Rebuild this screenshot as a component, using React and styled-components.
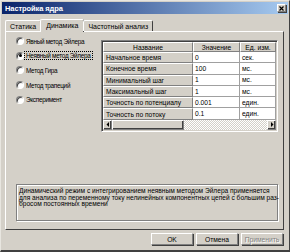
import React from 'react';
import styled, { createGlobalStyle, css } from 'styled-components';

const GlobalStyle = createGlobalStyle`
  html, body {
    margin: 0;
    padding: 0;
    background: #d4d0c8;
  }
  body {
    font-family: "Liberation Sans", Arial, sans-serif;
    font-size: 6.7px;
    color: #000;
  }
`;

const raised = css`
  border-top: 1px solid #fff;
  border-left: 1px solid #fff;
  border-right: 1px solid #808080;
  border-bottom: 1px solid #808080;
`;

const Window = styled.div`
  width: 290px;
  height: 252px;
  box-sizing: border-box;
  background: #d4d0c8;
  border-top: 1px solid #e8e6e0;
  border-left: 1px solid #e8e6e0;
  border-right: 1px solid #404040;
  border-bottom: 2px solid #404040;
  padding: 1px;
  display: flex;
  flex-direction: column;
`;

const TitleBar = styled.div`
  height: 12px;
  display: flex;
  align-items: center;
  justify-content: space-between;
  padding: 0 2px 0 3px;
  background: linear-gradient(to right, #0a246a, #a6caf0);
`;

const Title = styled.span`
  color: #fff;
  font-weight: bold;
  font-size: 7.5px;
  letter-spacing: -0.1px;
`;

const CloseButton = styled.div`
  width: 9px;
  height: 8px;
  box-sizing: border-box;
  background: #d4d0c8;
  ${raised};
  box-shadow: 1px 1px 0 #404040;
  display: flex;
  align-items: center;
  justify-content: center;
`;

const Body = styled.div`
  flex: 1;
  display: flex;
  flex-direction: column;
  padding: 3px 4px 0 3px;
`;

const TabStrip = styled.div`
  display: flex;
  align-items: flex-end;
  height: 14px;
  position: relative;
  z-index: 1;
`;

const Tab = styled.div`
  height: ${(p) => (p.active ? 13 : 11)}px;
  padding: 0 ${(p) => (p.active ? 5 : 4)}px;
  margin: ${(p) => (p.active ? '0 -1px -1px -1px' : '0')};
  box-sizing: border-box;
  display: flex;
  align-items: center;
  background: #d4d0c8;
  border-top: 1px solid #fff;
  border-left: 1px solid #fff;
  border-right: 1px solid #404040;
  border-radius: 2px 2px 0 0;
  padding-bottom: ${(p) => (p.active ? 1 : 0)}px;
  font-size: 7px;
  white-space: nowrap;
`;

const Panel = styled.div`
  height: 199px;
  box-sizing: border-box;
  ${raised};
  border-right-color: #404040;
  border-bottom-color: #404040;
  padding: 2px 4px 8px 10px;
  display: flex;
  flex-direction: column;
`;

const Top = styled.div`
  display: flex;
  align-items: flex-start;
`;

const RadioList = styled.div`
  width: 85px;
  display: flex;
  flex-direction: column;
`;

const RadioRow = styled.div`
  height: 14.6px;
  display: flex;
  align-items: center;
  gap: 1px;
  white-space: nowrap;
`;

const RadioCircle = styled.span`
  width: 8px;
  height: 8px;
  box-sizing: border-box;
  border-radius: 50%;
  background: #fff;
  border: 1px solid;
  border-color: #808080 #fff #fff #808080;
  box-shadow: inset 1px 1px 0 #404040;
  display: flex;
  align-items: center;
  justify-content: center;
  flex: none;
  &::after {
    content: '';
    width: 3px;
    height: 3px;
    border-radius: 50%;
    background: ${(p) => (p.checked ? '#000' : 'transparent')};
  }
`;

const RadioLabel = styled.span`
  padding: 0 1px;
  font-size: 6.4px;
  letter-spacing: -0.3px;
  outline: ${(p) => (p.focused ? '1px dotted #000' : 'none')};
`;

const Table = styled.div`
  margin-top: 6px;
  width: 177px;
  box-sizing: border-box;
  border-top: 1px solid #808080;
  border-left: 1px solid #808080;
  border-right: 1px solid #fff;
  border-bottom: 1px solid #fff;
  box-shadow: inset 1px 1px 0 #404040;
  padding: 1px;
  background: #d4d0c8;
`;

const GridBody = styled.div`
  display: grid;
  grid-template-columns: 90px 47px 36px;
  grid-template-rows: 10px repeat(6, 11.3px);
  background: #fff;
`;

const HeadCell = styled.div`
  box-sizing: border-box;
  background: #d4d0c8;
  ${raised};
  display: flex;
  align-items: center;
  justify-content: center;
  white-space: nowrap;
  overflow: hidden;
`;

const RowHead = styled(HeadCell)`
  justify-content: flex-start;
  padding-left: 2px;
`;

const Cell = styled.div`
  box-sizing: border-box;
  border-right: 1px solid #a0a0a0;
  border-bottom: 1px solid #a0a0a0;
  display: flex;
  align-items: center;
  padding-left: 2px;
  white-space: nowrap;
  background: #fff;
`;

const ScrollBar = styled.div`
  display: flex;
  height: 10px;
  background: repeating-conic-gradient(#fff 0 25%, #d4d0c8 0 50%) 0 0 / 2px 2px;
`;

const ScrollButton = styled.div`
  width: 9px;
  box-sizing: border-box;
  background: #d4d0c8;
  ${raised};
  box-shadow: inset -1px -1px 0 #404040;
  display: flex;
  align-items: center;
  justify-content: center;
  flex: none;
`;

const Thumb = styled.div`
  width: 72px;
  box-sizing: border-box;
  background: #d4d0c8;
  ${raised};
  box-shadow: inset -1px -1px 0 #404040;
`;

const Track = styled.div`
  flex: 1;
`;

const Description = styled.div`
  margin-top: auto;
  height: 37px;
  width: 262px;
  box-sizing: border-box;
  border: 1px solid #808080;
  box-shadow: inset 1px 1px 0 #fff, 1px 1px 0 #fff;
  padding: 3px 2px;
  font-size: 6.6px;
  line-height: 6.6px;
  white-space: nowrap;
`;

const ButtonRow = styled.div`
  display: flex;
  justify-content: flex-end;
  gap: 3px;
  padding: 3px 1px 0 0;
`;

const Button = styled.div`
  width: 42px;
  height: 12px;
  box-sizing: border-box;
  ${raised};
  box-shadow: 1px 1px 0 #404040;
  display: flex;
  align-items: center;
  justify-content: center;
  color: ${(p) => (p.disabled ? '#808080' : '#000')};
  text-shadow: ${(p) => (p.disabled ? '1px 1px 0 #fff' : 'none')};
`;

const Arrow = ({ dir }) => (
  <svg width="4" height="5" viewBox="0 0 4 5">
    {dir === 'left'
      ? <polygon points="3,0 3,5 0.5,2.5" fill="#000" />
      : <polygon points="1,0 1,5 3.5,2.5" fill="#000" />}
  </svg>
);

const methods = [
  'Явный метод Эйлера',
  'Неявный метод Эйлера',
  'Метод Гира',
  'Метод трапеций',
  'Эксперимент',
];

const rows = [
  ['Начальное время', '0', 'сек.'],
  ['Конечное время', '100', 'мс.'],
  ['Минимальный шаг', '1', 'мс.'],
  ['Максимальный шаг', '1', 'мс.'],
  ['Точность по потенциалу', '0.001', 'един.'],
  ['Точность по потоку', '0.1', 'един.'],
];

export default function App() {
  return (
    <>
      <GlobalStyle />
      <Window>
        <TitleBar>
          <Title>Настройка ядра</Title>
          <CloseButton>
            <svg width="5" height="5" viewBox="0 0 5 5">
              <path d="M0.5 0.5 L4.5 4.5 M4.5 0.5 L0.5 4.5" stroke="#000" strokeWidth="1.2" />
            </svg>
          </CloseButton>
        </TitleBar>
        <Body>
          <TabStrip>
            <Tab>Статика</Tab>
            <Tab active>Динамика</Tab>
            <Tab>Частотный анализ</Tab>
          </TabStrip>
          <Panel>
            <Top>
              <RadioList>
                {methods.map((m, i) => (
                  <RadioRow key={m}>
                    <RadioCircle checked={i === 1} />
                    <RadioLabel focused={i === 1}>{m}</RadioLabel>
                  </RadioRow>
                ))}
              </RadioList>
              <Table>
                <GridBody>
                  <HeadCell>Название</HeadCell>
                  <HeadCell>Значение</HeadCell>
                  <HeadCell>Ед. изм.</HeadCell>
                  {rows.map((r) => (
                    <React.Fragment key={r[0]}>
                      <RowHead>{r[0]}</RowHead>
                      <Cell>{r[1]}</Cell>
                      <Cell>{r[2]}</Cell>
                    </React.Fragment>
                  ))}
                </GridBody>
                <ScrollBar>
                  <ScrollButton><Arrow dir="left" /></ScrollButton>
                  <Thumb />
                  <Track />
                  <ScrollButton><Arrow dir="right" /></ScrollButton>
                </ScrollBar>
              </Table>
            </Top>
            <Description>
              Динамический режим с интегрированием неявным методом Эйлера применяется<br />
              для анализа по переменному току нелинейных компонентных цепей с большим раз-<br />
              бросом постоянных времени
            </Description>
          </Panel>
          <ButtonRow>
            <Button>OK</Button>
            <Button>Отмена</Button>
            <Button disabled>Применить</Button>
          </ButtonRow>
        </Body>
      </Window>
    </>
  );
}
